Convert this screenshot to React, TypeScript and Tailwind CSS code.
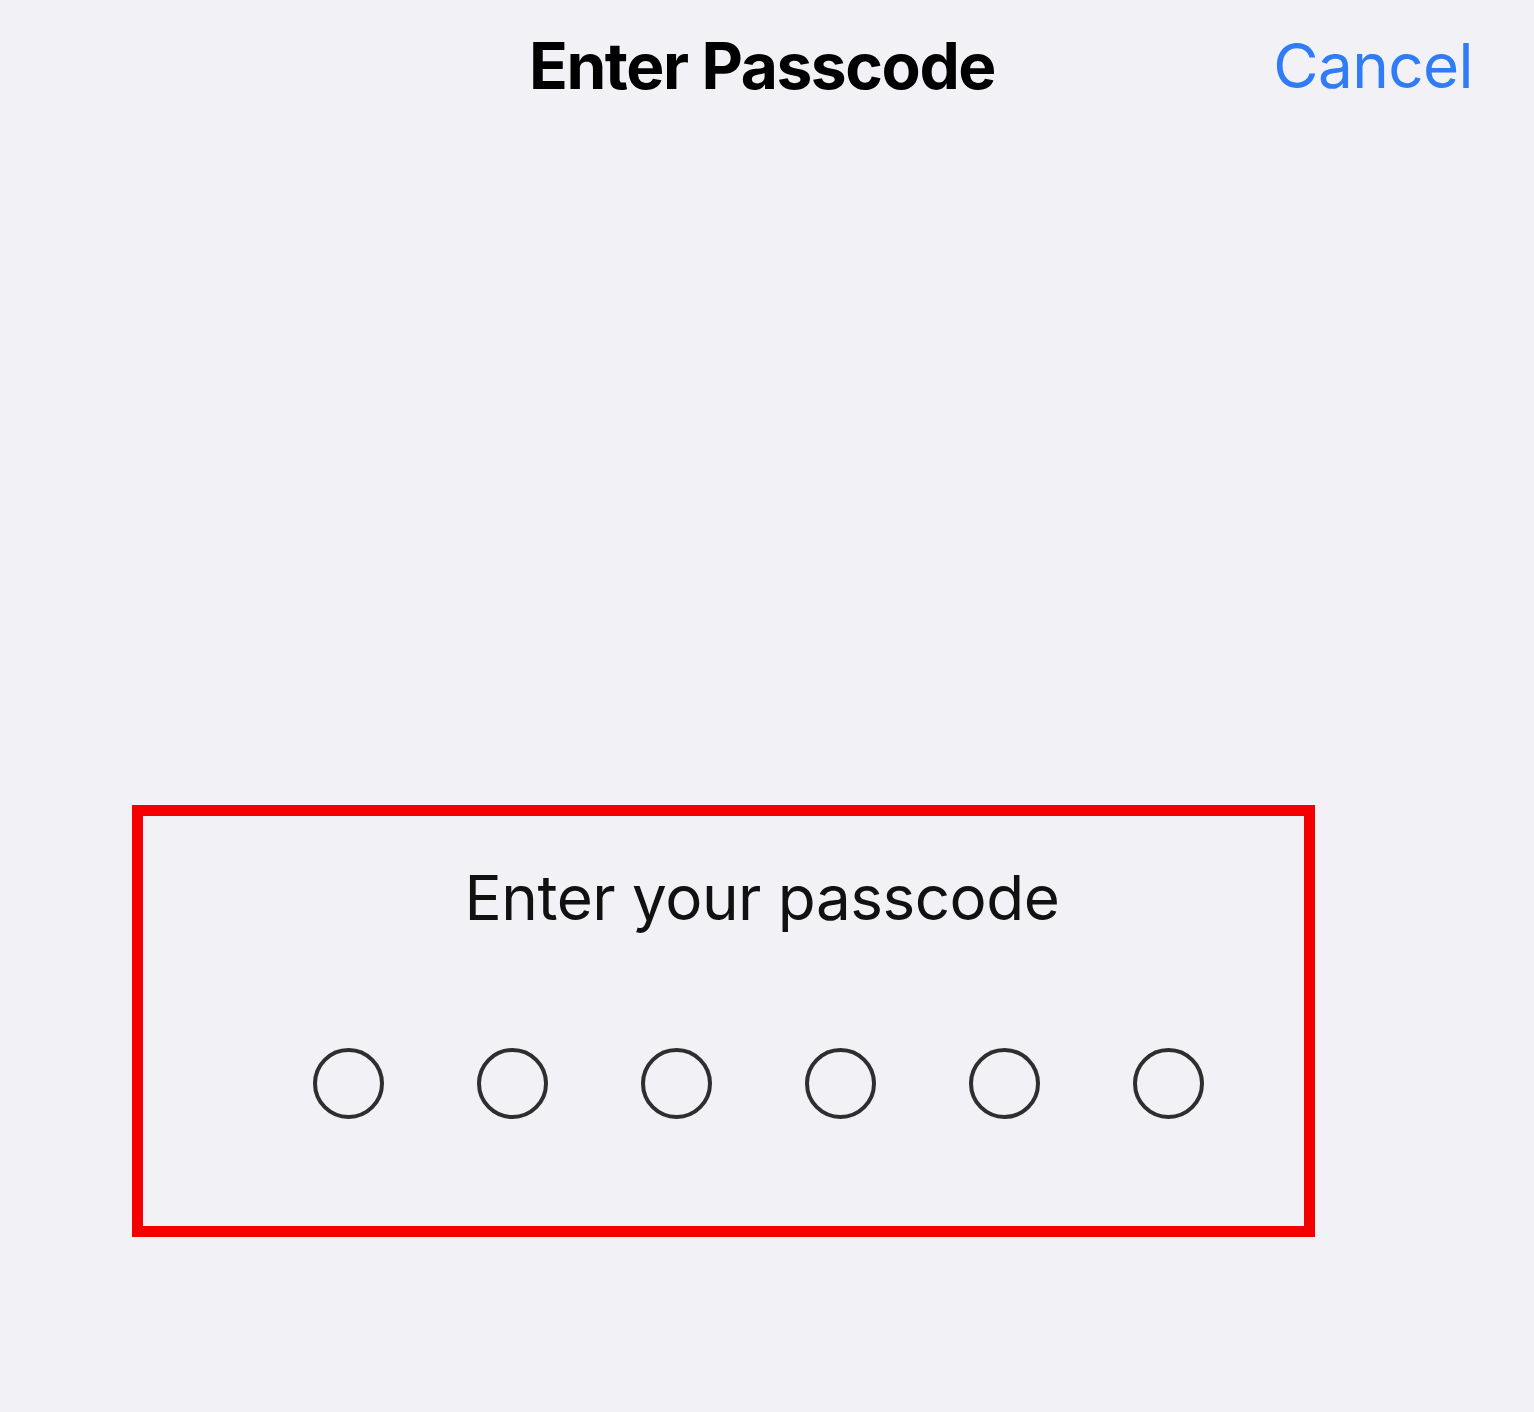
const DOTS = [0, 1, 2, 3, 4, 5]

export default function App() {
  return (
    <div className="relative w-[1534px] h-[1412px] bg-[#f1f1f6] overflow-hidden font-['Inter',sans-serif]">
      <div className="flex items-center justify-center h-[136px] relative">
        <h1 className="text-[64px] font-bold text-black tracking-[-1.4px] ml-[-10px] leading-none pb-[4px]">Enter Passcode</h1>
        <button className="absolute right-[61px] top-[35px] text-[62px] text-[#2f7cf6] tracking-[-0.6px] leading-none">Cancel</button>
      </div>

      <div className="flex flex-col items-center pt-[731px]">
        <p className="text-[62px] text-[#111] tracking-[-0.5px] leading-none ml-[-10px]">Enter your passcode</p>
        <div className="flex gap-[93px] mt-[119px] ml-[-18px]">
          {DOTS.map(i => (
            <div key={i} className="w-[71px] h-[71px] rounded-full border-[4px] border-[#2e2e2e]" />
          ))}
        </div>
      </div>

      <div className="absolute left-[132px] top-[805px] w-[1183px] h-[432px] border-[11px] border-[#f50000]" />
    </div>
  )
}
